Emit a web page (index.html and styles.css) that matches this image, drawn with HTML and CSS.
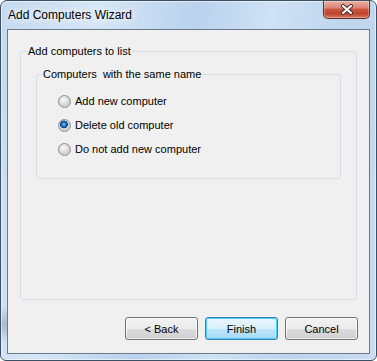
FILE: index.html
```html
<!DOCTYPE html>
<html lang="en">
<head>
  <meta charset="UTF-8">
  <meta name="viewport" content="width=device-width, initial-scale=1.0">
  <title>Add Computers Wizard</title>
  <link rel="stylesheet" href="styles.css">
</head>
<body>
  <div class="window">
    <div class="titlebar">
      <span class="title">Add Computers Wizard</span>
      <button class="close" title="Close">
        <svg width="14" height="11" viewBox="0 0 14 11">
          <path d="M3 2 L11 9 M11 2 L3 9" stroke="#3a2a28" stroke-width="4" stroke-linecap="round"/>
          <path d="M3 2 L11 9 M11 2 L3 9" stroke="#ffffff" stroke-width="2.2" stroke-linecap="round"/>
        </svg>
      </button>
    </div>
    <div class="client">
      <fieldset class="group list-group">
        <legend>Add computers to list</legend>
        <div class="group-body list-body">
          <fieldset class="group name-group">
            <legend>Computers&nbsp; with the same name</legend>
            <div class="group-body name-body">
              <label class="option"><input type="radio" name="dup"> Add new computer</label>
              <label class="option"><input type="radio" name="dup" checked> Delete old computer</label>
              <label class="option"><input type="radio" name="dup"> Do not add new computer</label>
            </div>
          </fieldset>
        </div>
      </fieldset>
      <div class="buttons">
        <button class="btn">&lt; Back</button>
        <button class="btn default">Finish</button>
        <button class="btn">Cancel</button>
      </div>
    </div>
  </div>
</body>
</html>
```

FILE: styles.css
```css
body {
  margin: 0;
  padding: 0;
  background: #ffffff;
  font-family: "Liberation Sans", Arial, sans-serif;
  font-size: 11px;
  color: #000000;
}
.window {
  box-sizing: border-box;
  width: 377px;
  height: 361px;
  display: flex;
  flex-direction: column;
  padding: 0 6px 6px 6px;
  border: 1px solid #3d4f63;
  border-radius: 7px 7px 6px 6px;
  background:
    linear-gradient(to bottom, rgba(255,255,255,0) 85%, rgba(90,110,135,0.35) 90%, rgba(255,255,255,0) 95%) left / 7px 100% no-repeat,
    linear-gradient(100deg, #c4d9ef 0%, #d6e6f6 22%, #b9d2ed 45%, #cfe1f4 62%, #bed5ee 80%, #c9dcf1 100%);
  box-shadow: inset 0 0 0 1px rgba(255,255,255,0.55);
}
.titlebar {
  height: 28px;
  display: flex;
  justify-content: space-between;
  align-items: flex-start;
}
.title {
  font-size: 12px;
  line-height: 16px;
  margin: 6px 0 0 1px;
  text-shadow: 0 0 6px #ffffff, 0 0 10px #ffffff;
}
.close {
  width: 47px;
  height: 18px;
  padding: 0;
  margin: 0;
  border: 1px solid #6b2b22;
  border-top: none;
  border-radius: 0 0 5px 5px;
  background: linear-gradient(to bottom, #eab0a2 0%, #dc8674 40%, #c9543c 50%, #c0452c 75%, #d47a62 100%);
  box-shadow: inset 0 0 0 1px rgba(255,255,255,0.3);
  display: flex;
  align-items: center;
  justify-content: center;
}
.client {
  flex: 1;
  display: flex;
  flex-direction: column;
  background: #f0f0f0;
  border: 1px solid #6a7a8c;
}
.group {
  margin: 0;
  padding: 0;
  min-width: 0;
  border: 1px solid #d5dfe5;
  border-radius: 3px;
}
.group legend {
  padding: 0 1px;
  line-height: 13px;
}
.list-group {
  flex: 1;
  margin: 15px 12px 0 12px;
}
.list-group > legend {
  margin-left: 6px;
}
.list-body {
  padding: 10px 15px 0 15px;
}
.name-group > legend {
  margin-left: 5px;
}
.name-body {
  padding: 8px 20px 17px 21px;
  display: flex;
  flex-direction: column;
}
.option {
  height: 24px;
  display: flex;
  align-items: center;
  gap: 4px;
}
.option input {
  appearance: none;
  width: 13px;
  height: 13px;
  margin: 0;
  border: 1px solid #8e8f8f;
  border-radius: 50%;
  background: radial-gradient(circle at 40% 35%, #fafafa 0, #e6e6e6 3px, #cfcfcf 6px);
}
.option input:checked {
  background:
    radial-gradient(circle at 45% 40%, #8fd8fb 0, #2b8ad3 1.5px, #10509a 3px, #0c3d78 3.6px, rgba(0,0,0,0) 4.2px),
    radial-gradient(circle at 40% 35%, #fafafa 0, #e6e6e6 3px, #cfcfcf 6px);
}
.buttons {
  display: flex;
  justify-content: flex-end;
  gap: 7px;
  margin: 17px 11px 13px 0;
}
.btn {
  width: 73px;
  height: 23px;
  padding: 0;
  font-family: "Liberation Sans", Arial, sans-serif;
  font-size: 11px;
  color: #000000;
  border: 1px solid #707070;
  border-radius: 3px;
  background: linear-gradient(to bottom, #f2f2f2 0%, #ebebeb 50%, #dddddd 51%, #cfcfcf 100%);
  box-shadow: inset 0 0 0 1px rgba(255,255,255,0.7);
}
.btn.default {
  border-color: #3c7fb1;
  background: linear-gradient(to bottom, #eaf6fd 0%, #d9f0fc 50%, #bee6fd 51%, #a7d9f5 100%);
  box-shadow: inset 0 0 0 1px #48d0f8;
}
```
